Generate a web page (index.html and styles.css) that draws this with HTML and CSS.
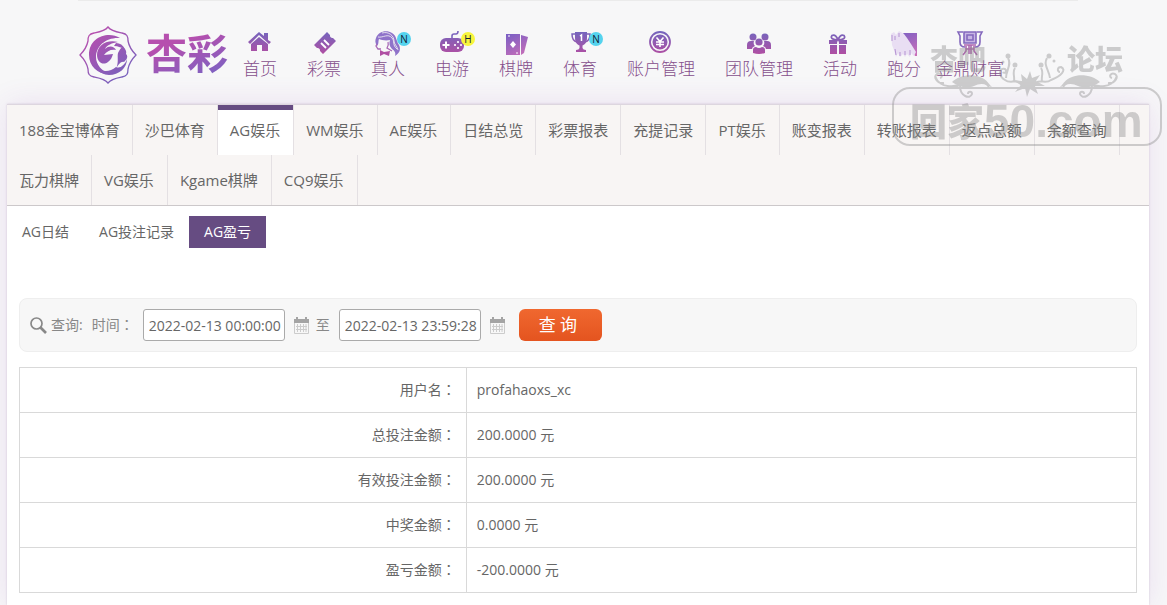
FILE: index.html
```html
<!DOCTYPE html>
<html lang="zh-CN">
<head>
<meta charset="utf-8">
<title>AG盈亏</title>
<link rel="stylesheet" href="styles.css">
</head>
<body>
<svg class="defs" width="0" height="0" aria-hidden="true">
  <defs>
    <linearGradient id="g" gradientUnits="userSpaceOnUse" x1="0" y1="3" x2="0" y2="25">
      <stop offset="0" stop-color="#7565bd"/><stop offset="1" stop-color="#b04fa3"/>
    </linearGradient>
    <linearGradient id="pink" gradientUnits="userSpaceOnUse" x1="8" y1="4" x2="20" y2="28">
      <stop offset="0" stop-color="#7b5fc4"/><stop offset="1" stop-color="#c96fb8"/>
    </linearGradient>
    <linearGradient id="lg" gradientUnits="userSpaceOnUse" x1="12" y1="8" x2="46" y2="52">
      <stop offset="0" stop-color="#b64fae"/><stop offset="1" stop-color="#7662bd"/>
    </linearGradient>
  </defs>
</svg>
<header class="header">
  <div class="header-inner">
    <a class="brand" href="#">
      <svg class="emblem" viewBox="0 0 58 58" aria-hidden="true">
        <path fill="none" stroke="url(#lg)" stroke-width="1.300" d="M29 1C26 5 20 6 15 7C10 8 9 10 9 15C8 20 5 25 1 29C5 33 8 38 9 43C9 48 10 50 15 51C20 52 26 53 29 57C32 53 38 52 43 51C48 50 49 48 49 43C50 38 53 33 57 29C53 25 50 20 49 15C49 10 48 8 43 7C38 6 32 5 29 1Z"/>
        <g fill="url(#lg)">
          <path d="M41 12C30 5 10 10 10 29C10 41 20 49 31 48C23 45 17 39 17 31C17 20 27 11 41 12Z"/>
          <path d="M39 16C27 13 18 20 18 29C18 36 24 40 29 36C32 34 33 31 34 28L25 29C28 25 32 23 37 24C35 20 30 19 26 23C28 19 33 17 39 16Z"/>
          <path d="M37 17C41 17 44 19 46 23C43 22 39 20 35 20Z"/>
          <path d="M43 21C46 22 48 25 47 28C50 31 47 34 45 36C42 35 39 39 37 43C40 36 38 31 39 27C40 25 41 23 43 21Z"/>
          <path d="M17 42C24 46 31 46 37 41C41 43 46 39 48 33C48 42 40 49 30 49C25 49 20 46 17 42Z"/>
        </g>
      </svg>
      <span class="brand-name">杏彩</span>
    </a>
    <nav>
      <ul class="nav">
        <li><a href="#"><span class="icon"><svg viewBox="0 0 28 28"><path fill="url(#g)" d="M2 13L13 3L18 7V4H22V11L25 13L23 15L13 6L4 15ZM5 15L13 8L22 15V22H16V16H11V22H5Z"/></svg></span>首页</a></li>
        <li><a href="#"><span class="icon"><svg viewBox="0 0 28 28"><path fill="url(#g)" d="M17 3L20 6A2.500 2.500 0 0 0 23 9L26 12L13 25L10 22A2.500 2.500 0 0 0 7 19L4 16Z"/><path stroke="#fff" stroke-width="1.800" d="M11 14L16 19M14 11L19 16"/></svg></span>彩票</a></li>
        <li><a href="#"><span class="icon"><svg viewBox="0 0 28 28"><path fill="#8f73ca" d="M2 9C4 3 12 0 18 4C23 7 22 12 25 16C27 20 26 24 21 27C22 24 21 22 18 20C15 17 15 14 16 11C12 12 7 11 5 10C4 13 5 15 3 17C1 14 1 11 2 9Z"/><g fill="none" stroke="#f7f7f8" stroke-width=".8"><path d="M4 8C9 9 14 4 18 9C21 12 18 16 23 20"/><path d="M8 4C15 2 20 7 20 12C20 15 23 17 24 21"/></g><path fill="none" stroke="#a868b5" stroke-width="1.300" d="M3 15L2 17L4 20L7 20M14 13Q15 16 13 19L18 22"/><path fill="#b04fa3" d="M6 21L10 23L16 22L15 27L10 25L6 27Z"/></svg><b class="badge badge-n">N</b></span>真人</a></li>
        <li><a href="#"><span class="icon"><svg viewBox="0 0 28 28"><path fill="none" stroke="#7b63bd" stroke-width="1.600" d="M14 10V7Q14 5 16 5H18Q20 5 20 2"/><rect x="2" y="9" width="24" height="14" rx="6" fill="url(#g)"/><path stroke="#fff" stroke-width="2" d="M4.500 16H11.500M8 12.500V19.500"/><g fill="#fff"><circle cx="20" cy="13" r="1.100"/><circle cx="20" cy="19" r="1.100"/><circle cx="17" cy="16" r="1.100"/><circle cx="23" cy="16" r="1.100"/></g></svg><b class="badge badge-h">H</b></span>电游</a></li>
        <li><a href="#"><span class="icon"><svg viewBox="0 0 28 28"><path fill="url(#pink)" d="M4 5H18V26H4ZM19 6L26 8L22 24L19 26Z"/><path fill="#fff" d="M11 12L14 15.500L11 19L8 15.500Z"/><path stroke="#fff" d="M6 7H8M14 24H16"/></svg></span>棋牌</a></li>
        <li><a href="#"><span class="icon"><svg viewBox="0 0 28 28"><path fill="url(#g)" d="M9 3H21V9C21 14 18 16 16.500 16.500V19Q17 21 20 21V23H10V21Q13 21 13.500 19V16.500C12 16 9 14 9 9Z"/><path fill="none" stroke="url(#g)" stroke-width="1.500" d="M9 5H6Q6 12 11 13M21 5H24Q24 12 19 13"/><path fill="none" stroke="#fff" stroke-width="1.500" d="M14 7L15.500 6V12"/></svg><b class="badge badge-n">N</b></span>体育</a></li>
        <li><a href="#"><span class="icon"><svg viewBox="0 0 28 28"><circle cx="13" cy="13" r="10" fill="none" stroke="url(#g)" stroke-width="1.800"/><circle cx="13" cy="13" r="7.500" fill="url(#g)"/><path fill="none" stroke="#fff" stroke-width="1.600" d="M9.500 8.500L13 12.500L16.500 8.500M9 13H17M9 15.500H17M13 12V18"/></svg></span>账户管理</a></li>
        <li><a href="#"><span class="icon"><svg viewBox="0 0 28 28"><g fill="url(#g)"><circle cx="8" cy="8" r="3.500"/><circle cx="20" cy="8" r="3.500"/><path d="M2 20V16Q2 12 6 12H9Q8 15 10 17Q7 18 7 20ZM26 20V16Q26 12 22 12H19Q20 15 18 17Q21 18 21 20Z"/><circle cx="14" cy="13" r="3.600"/><path d="M8 24V21Q8 18 11 18Q14 20 17 18Q20 18 20 21V24Q14 26 8 24Z"/></g></svg></span>团队管理</a></li>
        <li><a href="#"><span class="icon"><svg viewBox="0 0 28 28"><path fill="url(#g)" d="M3 11H11V15H3ZM13 11H21V15H13ZM4 16H11V25H4ZM13 16H20V25H13Z"/><path fill="none" stroke="url(#g)" stroke-width="1.800" d="M12 11C7 11 4 9 6 6.500C9 5 11 8 12 11C13 8 15 5 18 6.500C20 9 17 11 12 11"/></svg></span>活动</a></li>
        <li><a href="#"><span class="icon"><svg viewBox="0 0 28 28"><path fill="url(#pink)" d="M13 4H27V27H25L20 18Z"/><path fill="#e9def3" d="M1 5L4 3L6 6L9 2L14 5L17 9L21 15L26 23L24 27L21 24L20 28L17 25L15 28L13 25L10 28L8 24L6 28L4 21L2 16Z"/><path fill="none" stroke="#b493d2" d="M2 6V12M5 7V11M9 4V8M5 20L6 26M10 23V27M15 22V26M20 21V26"/></svg></span>跑分</a></li>
        <li><a href="#"><span class="icon"><svg viewBox="0 0 28 28"><path fill="#c7b5e4" d="M8 3H20V14H8Z"/><g fill="none" stroke="#8468bd" stroke-width="1.600"><path d="M8 3H20V14H8ZM11 6H17V11H11ZM7 3H2L4 7V13Q4 18 9 18M21 3H26L24 7V13Q24 18 19 18"/><path stroke="#ae67af" d="M8 16H20M10 17V22L7 26M18 17V22L21 26M13 16V25M15 16V25M10 20H18"/></g></svg></span>金鼎财富</a></li>
      </ul>
    </nav>
  </div>
</header>
<main class="panel">
  <ul class="tabs">
    <li><a href="#">188金宝博体育</a></li>
    <li><a href="#">沙巴体育</a></li>
    <li class="active latin"><a href="#">AG娱乐</a></li>
    <li class="latin"><a href="#">WM娱乐</a></li>
    <li class="latin"><a href="#">AE娱乐</a></li>
    <li><a href="#">日结总览</a></li>
    <li><a href="#">彩票报表</a></li>
    <li><a href="#">充提记录</a></li>
    <li class="latin"><a href="#">PT娱乐</a></li>
    <li><a href="#">账变报表</a></li>
    <li><a href="#">转账报表</a></li>
    <li><a href="#">返点总额</a></li>
    <li><a href="#">余额查询</a></li>
    <li><a href="#">瓦力棋牌</a></li>
    <li class="latin"><a href="#">VG娱乐</a></li>
    <li class="latin"><a href="#">Kgame棋牌</a></li>
    <li class="latin"><a href="#">CQ9娱乐</a></li>
  </ul>
  <ul class="subtabs">
    <li><a href="#">AG日结</a></li>
    <li><a href="#">AG投注记录</a></li>
    <li class="active"><a href="#">AG盈亏</a></li>
  </ul>
  <form class="filter">
    <svg class="search" viewBox="0 0 17 17" aria-hidden="true"><circle cx="6.500" cy="6.500" r="5.500" fill="none" stroke="#888" stroke-width="1.700"/><path stroke="#888" stroke-width="2.600" d="M10.500 10.500L16 16"/></svg>
    <span class="filter-title">查询:</span>
    <label for="from">时间<span class="colon" lang="zh-TW">：</span></label>
    <input id="from" type="text" value="2022-02-13 00:00:00">
    <svg class="calendar" viewBox="0 0 15 17" aria-hidden="true"><path fill="#a4a4a4" d="M0 2H2V0H4V2H11V0H13V2H15V6H0Z"/><path fill="none" stroke="#ccc" d="M.5 6V16.500H14.500V6M3.500 7V15M6.500 7V15M9.500 7V15M12 7V15M2 9.500H13M2 12.500H13"/></svg>
    <label for="to">至</label>
    <input id="to" type="text" value="2022-02-13 23:59:28">
    <svg class="calendar" viewBox="0 0 15 17" aria-hidden="true"><path fill="#a4a4a4" d="M0 2H2V0H4V2H11V0H13V2H15V6H0Z"/><path fill="none" stroke="#ccc" d="M.5 6V16.500H14.500V6M3.500 7V15M6.500 7V15M9.500 7V15M12 7V15M2 9.500H13M2 12.500H13"/></svg>
    <button type="button">查 询</button>
  </form>
  <table class="report">
    <tr><th scope="row">用户名<span class="colon" lang="zh-TW">：</span></th><td>profahaoxs_xc</td></tr>
    <tr><th scope="row">总投注金额<span class="colon" lang="zh-TW">：</span></th><td>200.0000 元</td></tr>
    <tr><th scope="row">有效投注金额<span class="colon" lang="zh-TW">：</span></th><td>200.0000 元</td></tr>
    <tr><th scope="row">中奖金额<span class="colon" lang="zh-TW">：</span></th><td>0.0000 元</td></tr>
    <tr><th scope="row">盈亏金额<span class="colon" lang="zh-TW">：</span></th><td>-200.0000 元</td></tr>
  </table>
</main>
<svg class="watermark" viewBox="0 0 272 108">
  <rect x="3" y="48" width="268" height="57" rx="17" fill="none" stroke="#8c8c8c" stroke-width="2"/>
  <g class="wm-title"><text x="40" y="30">杏吧</text><text x="177" y="30">论坛</text></g>
  <text class="wm-cjk" x="20" y="96">回家</text>
  <text class="wm-latin" x="94" y="97">50.com</text>
  <g fill="none" stroke="#8c8c8c" stroke-width="2">
    <path d="M54 43C47 44 43 37 47 34C51 32 54 37 50 38M45 36C50 50 67 47 76 43C84 39 94 40 99 47M70 46C70 56 80 60 82 54C82 51 78 51 78 54"/>
    <path d="M218 43C225 44 229 37 225 34C221 32 218 37 222 38M227 36C222 50 205 47 196 43C188 39 178 40 173 47M202 46C202 56 192 60 190 54C190 51 194 51 194 54"/>
    <path d="M132 46C128 37 121 45 115 40C107 35 110 27 115 29C118 32 114 34 113 32M116 38C116 30 122 25 118 18M124 42C125 36 122 32 125 28M144 46C148 37 155 45 161 40C171 36 177 30 171 27C167 27 167 32 170 32M160 38C159 30 153 25 157 18M152 42C151 36 154 32 151 28"/>
  </g>
  <g fill="#8c8c8c">
    <path d="M62 42C68 36 81 33 90 37C97 39 100 46 103 48C95 43 90 43 84 46C76 49 69 47 62 42ZM210 42C204 36 191 33 182 37C175 39 172 46 169 48C177 43 182 43 188 46C196 49 203 47 210 42Z"/>
    <path d="M137 39L140 31L142 38L150 35L146 41L155 46L145 46L148 54L140 49L137 57L135 48L125 52L131 45L122 40L132 41L131 34Z"/>
    <circle cx="118" cy="16" r="2.500"/><circle cx="125" cy="25" r="2.500"/><circle cx="159" cy="16" r="2.500"/><circle cx="151" cy="25" r="2.500"/><circle cx="113" cy="22" r="1.500"/><circle cx="164" cy="21" r="1.500"/>
  </g>
</svg>
</body>
</html>
```
FILE: styles.css
```css
* {
  box-sizing: border-box;
}

body {
  position: relative;
  margin: 0;
  min-height: 100vh;
  padding: 0 18px 0 7px;
  overflow-x: hidden;
  display: flex;
  flex-direction: column;
  background: #f7f7f8;
  color: #666;
  font: 14px/20px "Open Sans", "Noto Sans CJK SC", sans-serif;
}

ul {
  list-style: none;
  margin: 0;
  padding: 0;
}

a {
  color: inherit;
  text-decoration: none;
}

.defs {
  position: absolute;
}

.header-inner {
  max-width: 1000px;
  height: 104px;
  margin: 0 auto;
  border-top: 1px solid #ebebeb;
  display: flex;
}

.brand {
  flex: none;
  width: 150px;
  padding: 25px 0 0 1px;
  display: flex;
  gap: 9px;
}

.emblem {
  flex: none;
  width: 58px;
  height: 58px;
}

.brand-name {
  font: 700 41px/50px "Noto Sans CJK SC", sans-serif;
  white-space: nowrap;
  background: linear-gradient(160deg, #b64fae 25%, #7564c4 75%);
  background-clip: text;
  -webkit-background-clip: text;
  color: transparent;
}

.nav {
  display: flex;
  padding-top: 28px;
}

.nav li {
  padding: 0 15px;
}

.nav li:last-child {
  padding-left: 0;
}

.nav a {
  display: flex;
  flex-direction: column;
  align-items: center;
  font: 300 17px/22px "Noto Sans CJK SC", sans-serif;
  white-space: nowrap;
  color: #864f8c;
}

.icon {
  position: relative;
  width: 28px;
  height: 28px;
}

.icon svg {
  display: block;
  width: 28px;
  height: 28px;
}

.badge {
  position: absolute;
  left: 23px;
  top: 3px;
  width: 14px;
  height: 14px;
  border-radius: 7px;
  font: 10px/14px "Open Sans", sans-serif;
  text-align: center;
  color: #123;
}

.badge-n {
  background: #55d3ee;
}

.badge-h {
  background: #f8f53c;
}

.panel {
  flex: 1;
  padding-bottom: 12px;
  background: #fff;
  border-top: 1px solid #ddd6df;
  box-shadow: 0 0 2px rgba(90, 60, 110, 0.2), 0 0 28px rgba(140, 50, 180, 0.12);
}

.tabs {
  display: flex;
  flex-wrap: wrap;
  background: #f8f5f4;
  border-bottom: 1px solid #ccc8ca;
  font-size: 15px;
}

.tabs li {
  border-right: 1px solid #e4e0e3;
}

.tabs a {
  display: block;
  padding: 0 12px;
  line-height: 50px;
}

.tabs .latin a {
  padding-right: 13px;
}

.tabs .active {
  background: #fff;
  box-shadow: inset 0 5px #664c82;
}

.subtabs {
  display: flex;
  padding-top: 10px;
}

.subtabs a {
  display: block;
  padding: 0 15px;
  line-height: 32px;
}

.subtabs .active {
  background: #664c82;
  color: #fff;
}

.filter {
  display: flex;
  align-items: center;
  margin: 50px 12px 15px;
  padding: 10px;
  border: 1px solid #eee;
  border-radius: 8px;
  background: #f7f7f7;
  color: #888;
}

.search {
  width: 17px;
  height: 17px;
  margin-right: 4px;
}

.filter-title {
  margin-right: 9px;
}

.colon {
  font-family: "Noto Sans CJK TC", sans-serif;
  line-height: 0;
}

.filter input {
  width: 142px;
  height: 32px;
  margin: 0 9px;
  padding: 0 0 0 5px;
  border: 1px solid #aaa;
  border-radius: 3px;
  background: #fff;
  color: #666;
  font: inherit;
}

.calendar {
  width: 15px;
  height: 17px;
  margin-right: 7px;
}

.filter button {
  height: 32px;
  margin-left: 7px;
  padding: 0 25px 0 20px;
  border: 0;
  border-radius: 6px;
  background: linear-gradient(#f0682f, #e4541f);
  color: #fff;
  font: 17px/30px "Open Sans", "Noto Sans CJK SC", sans-serif;
}

.report {
  width: calc(100% - 24px);
  margin: 0 12px;
  border-collapse: collapse;
  table-layout: fixed;
}

.report th,
.report td {
  height: 45px;
  padding: 0 10px;
  border: 1px solid #d9d9d9;
  text-align: left;
  font-weight: 400;
}

.report th {
  width: 40%;
  text-align: right;
}

.watermark {
  position: absolute;
  left: 890px;
  top: 40px;
  width: 272px;
  height: 108px;
  opacity: 0.4;
  pointer-events: none;
}

.watermark text {
  fill: #8c8c8c;
  font-family: "Noto Sans CJK SC", sans-serif;
  font-weight: 900;
}

.watermark .wm-title text {
  font-size: 28px;
}

.watermark .wm-cjk {
  font-size: 37px;
}

.watermark .wm-latin {
  font: 700 46px "Liberation Sans", sans-serif;
}
```
